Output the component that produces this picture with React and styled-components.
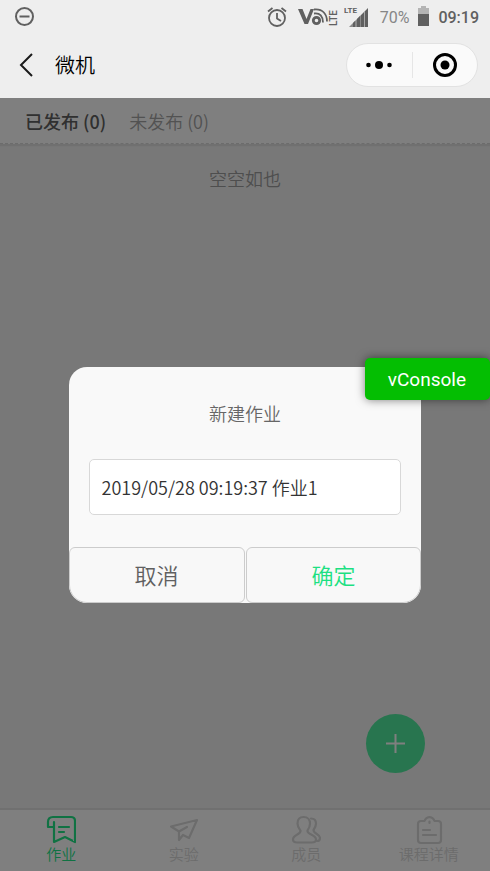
import React, { useState } from "react";
import styled, { createGlobalStyle } from "styled-components";

const GlobalStyle = createGlobalStyle`
  *, *::before, *::after { box-sizing: border-box; }
  body {
    margin: 0;
    font-family: "Noto Sans CJK SC", "Noto Sans", sans-serif;
    font-weight: 350;
    background: #eee;
  }
  button, input { font-family: inherit; font-weight: inherit; }
  svg { display: block; flex: none; }
`;

const Page = styled.div`
  min-height: 100vh;
  display: flex;
  flex-direction: column;
`;

const StatusBar = styled.div`
  height: 34px;
  padding: 0 11px 0 14px;
  display: flex;
  align-items: center;
  justify-content: space-between;
  color: #606060;
  font-family: Roboto, sans-serif;
  font-size: 16px;
  font-weight: 400;
`;

const StatusGroup = styled.div`
  display: flex;
  align-items: center;
`;

const SignalGroup = styled.div`
  margin-left: 10px;
  display: flex;
  gap: 4px;
`;

const Battery = styled.span`
  margin: 0 8px 0 10px;
  color: #868686;
`;

const Clock = styled.time`
  margin-left: 8px;
  font-weight: 500;
`;

const TitleBar = styled.header`
  height: 64px;
  padding: 0 12px 2px 14px;
  display: flex;
  align-items: center;
`;

const BackButton = styled.button`
  padding: 0;
  border: 0;
  background: none;
  color: #1a1a1a;
`;

const Title = styled.h1`
  flex: 1;
  margin: 0 0 0 17px;
  font-size: 20px;
  line-height: 28px;
  font-weight: 350;
  color: #000;
`;

const Capsule = styled.div`
  width: 132px;
  height: 44px;
  display: flex;
  align-items: center;
  border: 1px solid #e2e2e2;
  border-radius: 22px;
  background: #fafafa;
`;

const CapsuleButton = styled.button`
  flex: 1;
  height: 26px;
  padding: 0;
  display: flex;
  align-items: center;
  justify-content: center;
  border: 0;
  background: none;
  color: #000;

  & + & { border-left: 1px solid #e6e6e6; }
`;

const Screen = styled.div`
  flex: 1;
  position: relative;
  display: flex;
  flex-direction: column;
  background: #f0f0f0;
`;

const Tabs = styled.div`
  height: 46px;
  padding: 0 25px;
  display: flex;
  align-items: center;
  gap: 23px;
  background: #fff;
  border-bottom: 1px dashed #d8d8d8;
  box-shadow: 0 2px 1px #e0e0e0;
`;

const Tab = styled.button`
  padding: 0;
  border: 0;
  background: none;
  font-size: 18px;
  line-height: 26px;
  font-weight: ${(p) => (p.$active ? 500 : 350)};
  color: ${(p) => (p.$active ? "#606060" : "#a4a4a4")};
`;

const Content = styled.main`
  flex: 1;
`;

const Empty = styled.p`
  margin: 21px 0 0;
  text-align: center;
  font-size: 18px;
  line-height: 26px;
  color: #9c9c9c;
`;

const AddButton = styled.button`
  position: absolute;
  right: 65px;
  bottom: 98px;
  width: 59px;
  height: 59px;
  padding: 0;
  display: flex;
  align-items: center;
  justify-content: center;
  border: 0;
  border-radius: 50%;
  background: #50ea9e;
  color: #fff;
`;

const NavBar = styled.nav`
  display: flex;
  height: 63px;
  border-top: 2px solid #e0e0e0;
  background: #fff;
`;

const NavItem = styled.a`
  flex: 1;
  padding-top: 5px;
  display: flex;
  flex-direction: column;
  align-items: center;
  text-decoration: none;
  font-size: 15px;
  line-height: 18px;
  color: ${(p) => (p.$active ? "#20e586" : "#d8d8d8")};
`;

const Overlay = styled.div`
  position: absolute;
  inset: 0;
  display: flex;
  align-items: center;
  justify-content: center;
  background: rgba(0, 0, 0, 0.5);
`;

const Dialog = styled.form`
  width: 72%;
  overflow: hidden;
  border-radius: 18px;
  background: #f9f9f9;
`;

const DialogTitle = styled.label`
  display: block;
  padding: 33px 20px;
  text-align: center;
  font-size: 18px;
  line-height: 26px;
  color: #666;
`;

const NameInput = styled.input`
  display: block;
  width: calc(100% - 40px);
  height: 56px;
  margin: 0 20px 32px;
  padding: 0 12px;
  border: 1px solid #d8d8d8;
  border-radius: 5px;
  outline: 0;
  background: #fff;
  font-size: 18px;
  color: #333;
`;

const DialogActions = styled.div`
  display: flex;
  gap: 1px;
`;

const DialogButton = styled.button`
  flex: 1;
  height: 56px;
  padding: 0 0 2px;
  border: 1px solid #ccc;
  border-radius: ${(p) => (p.$primary ? "6px 6px 18px 6px" : "6px 6px 6px 18px")};
  background: #f8f8f8;
  font-size: 22px;
  color: ${(p) => (p.$primary ? "#1ce082" : "#606060")};
`;

const ConsoleButton = styled.button`
  position: absolute;
  right: 0;
  bottom: 471px;
  height: 42px;
  padding: 0 24px 0 23px;
  border: 0;
  border-radius: 5px;
  background: #04be02;
  box-shadow: 0 0 10px rgba(0, 0, 0, 0.5);
  font-family: Roboto, sans-serif;
  font-size: 19px;
  font-weight: 400;
  color: #fff;
`;

const MuteIcon = () => (
  <svg width="20" height="20" viewBox="0 0 20 20" fill="none" stroke="currentColor" strokeWidth="2">
    <circle cx="10.500" cy="9.500" r="8.500" />
    <path d="M5.500 9.500h10" />
  </svg>
);

const AlarmIcon = () => (
  <svg width="22" height="22" viewBox="0 0 22 22" fill="none" stroke="currentColor" strokeWidth="1.800">
    <circle cx="11" cy="12" r="8" />
    <path d="M2 5.500 6.500 2M20 5.500 15.500 2M11 7v5.500l4 2.500" />
  </svg>
);

const VolteIcon = () => (
  <svg width="42" height="22" viewBox="0 0 42 22" fill="none" stroke="currentColor">
    <path d="M0 3h4.500l4 10 4-10H16l-6 15H6.500z" fill="currentColor" stroke="none" />
    <circle cx="18.500" cy="14.500" r="3.200" strokeWidth="2.800" />
    <path d="M16 7.500c6-1 9 3 9 9" strokeWidth="1.800" />
    <path d="M16 3.500c9-1 13 5 13 12" strokeWidth="1.800" />
    <text transform="translate(39 20) rotate(-90)" fill="currentColor" stroke="none" fontFamily="Roboto" fontSize="10" fontWeight="500">LTE</text>
  </svg>
);

const SignalIcon = () => (
  <svg width="26" height="22" viewBox="0 0 26 22" fill="currentColor">
    <text x="0" y="7" fontFamily="Roboto" fontSize="8" fontWeight="700">LTE</text>
    <path d="M5 21 17 9v12z" opacity=".7" />
    <path d="M9 17l2-2v6H9zM13 13l3-3v11h-3zM17 9l3-3v15h-3zM20.500 5.500 24 2v19h-3.500z" />
  </svg>
);

const BatteryIcon = () => (
  <svg width="13" height="22" viewBox="0 0 13 22">
    <path d="M4 0h5v2h3v6H1V2h3z" fill="#b4b4b4" />
    <path d="M1 8h11v12H1z" fill="#606060" />
  </svg>
);

const BackIcon = () => (
  <svg width="24" height="28" viewBox="0 0 24 28" fill="none" stroke="currentColor" strokeWidth="2">
    <path d="M18 3 7 14l11 11" />
  </svg>
);

const MoreIcon = () => (
  <svg width="28" height="12" viewBox="0 0 28 12" fill="currentColor">
    <circle cx="3.500" cy="6" r="2.300" />
    <circle cx="14" cy="6" r="4" />
    <circle cx="24.500" cy="6" r="2.300" />
  </svg>
);

const TargetIcon = () => (
  <svg width="26" height="26" viewBox="0 0 26 26">
    <circle cx="13" cy="13" r="10.500" fill="none" stroke="currentColor" strokeWidth="3" />
    <circle cx="13" cy="13" r="4.500" fill="currentColor" />
  </svg>
);

const PlusIcon = () => (
  <svg width="19" height="19" viewBox="0 0 19 19" stroke="currentColor" strokeWidth="2">
    <path d="M9.500 0v19M0 9.500h19" />
  </svg>
);

const NavIcon = ({ children }) => (
  <svg width="30" height="30" viewBox="0 0 30 30" fill="none" stroke="currentColor" strokeWidth="2.200" strokeLinecap="round" strokeLinejoin="round">
    {children}
  </svg>
);

const homeworkIcon = (
  <NavIcon>
    <path d="M8 7v20l11-5 10 5V6q0-4-4-4H7Q2 2 2 7v5h5M13 12h10M13 17h5" />
  </NavIcon>
);

const experimentIcon = (
  <NavIcon>
    <path d="M18 12l-8 4.500L2 11.500 28 5l-8 18-6-3-4 5v-8" />
  </NavIcon>
);

const membersIcon = (
  <NavIcon>
    <path d="M12.500 2C8 2 6.500 5 6.500 8.500c0 3.500 1.500 5 3 7 1 4-7.500 4-7.500 9q0 3 4 3h15q4 0 4-3c0-5-9.500-5-8.500-9 1.500-2 2.500-3.500 2.500-7C19 5 17 2 12.500 2z" />
    <path d="M20 3.500c4 0 5 2 5 5 0 3-1 4.500-2.500 6.500 0 4 6.500 4 6.500 8q0 3-3 3" />
  </NavIcon>
);

const detailsIcon = (
  <NavIcon>
    <path d="M10.500 6H7Q4 6 4 9v16q0 3 3 3h17q3 0 3-3V9q0-3-3-3h-3.500q-1-3.500-5-4-4 .5-5 4zM15.500 6.500v1.500M9 15h7M9 20h13" />
  </NavIcon>
);

const navItems = [
  { id: "homework", label: "作业", icon: homeworkIcon },
  { id: "experiment", label: "实验", icon: experimentIcon },
  { id: "members", label: "成员", icon: membersIcon },
  { id: "details", label: "课程详情", icon: detailsIcon },
];

export default function App() {
  const [name, setName] = useState("2019/05/28 09:19:37 作业1");

  return (
    <Page>
      <GlobalStyle />
      <StatusBar>
        <MuteIcon />
        <StatusGroup>
          <AlarmIcon />
          <SignalGroup>
            <VolteIcon />
            <SignalIcon />
          </SignalGroup>
          <Battery>70%</Battery>
          <BatteryIcon />
          <Clock>09:19</Clock>
        </StatusGroup>
      </StatusBar>
      <TitleBar>
        <BackButton type="button" aria-label="返回"><BackIcon /></BackButton>
        <Title>微机</Title>
        <Capsule>
          <CapsuleButton type="button" aria-label="更多"><MoreIcon /></CapsuleButton>
          <CapsuleButton type="button" aria-label="关闭"><TargetIcon /></CapsuleButton>
        </Capsule>
      </TitleBar>
      <Screen>
        <Tabs>
          <Tab type="button" $active>已发布 (0)</Tab>
          <Tab type="button">未发布 (0)</Tab>
        </Tabs>
        <Content>
          <Empty>空空如也</Empty>
        </Content>
        <AddButton type="button" aria-label="新建"><PlusIcon /></AddButton>
        <NavBar>
          {navItems.map((item) => (
            <NavItem key={item.id} href={`#${item.id}`} $active={item.id === "homework"}>
              {item.icon}
              {item.label}
            </NavItem>
          ))}
        </NavBar>
        <Overlay>
          <Dialog onSubmit={(e) => e.preventDefault()}>
            <DialogTitle htmlFor="name">新建作业</DialogTitle>
            <NameInput id="name" value={name} onChange={(e) => setName(e.target.value)} />
            <DialogActions>
              <DialogButton type="button">取消</DialogButton>
              <DialogButton type="submit" $primary>确定</DialogButton>
            </DialogActions>
          </Dialog>
        </Overlay>
        <ConsoleButton type="button">vConsole</ConsoleButton>
      </Screen>
    </Page>
  );
}
